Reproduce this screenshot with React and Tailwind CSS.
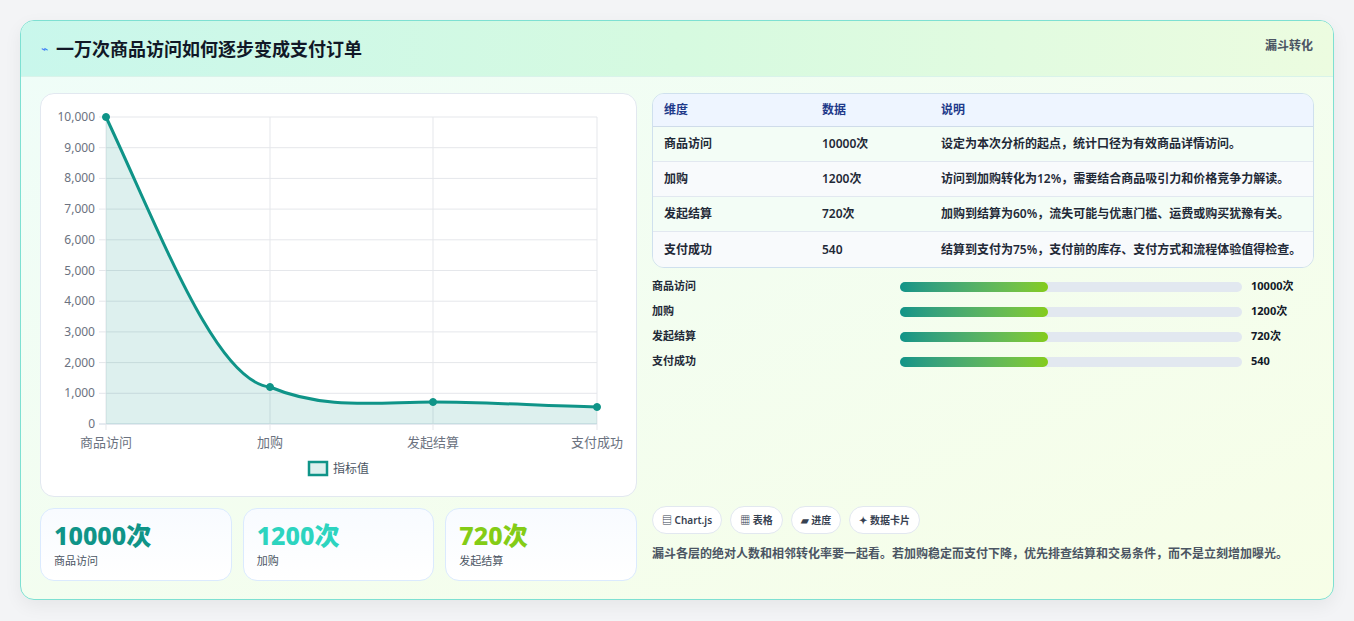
export default function App() {
  const f = { fontFamily: '"Noto Sans","Noto Sans CJK SC",sans-serif' };
  const rows = [
    ["商品访问", "10000次", "设定为本次分析的起点，统计口径为有效商品详情访问。"],
    ["加购", "1200次", "访问到加购转化为12%，需要结合商品吸引力和价格竞争力解读。"],
    ["发起结算", "720次", "加购到结算为60%，流失可能与优惠门槛、运费或购买犹豫有关。"],
    ["支付成功", "540", "结算到支付为75%，支付前的库存、支付方式和流程体验值得检查。"],
  ];
  const yTicks = [0,1,2,3,4,5,6,7,8,9,10];
  const py = (v) => 330 - v * 30.7;
  const xs = [65, 229, 392, 556];
  const line = "M65 23 C120 140 175 288 229 293 C283 316 337 308 392 308 C447 308 501 312 556 313";
  return (
    <div className="w-[1354px] h-[621px] bg-[#f3f4f6] pt-[20px] px-[20px]" style={f}>
      <div className="h-[580px] rounded-[14px] border border-[#7ee0d2] bg-gradient-to-br from-[#effdf9] to-[#f7fee7] overflow-hidden shadow-[0_6px_18px_rgba(0,0,0,0.06)]">
        <div className="h-[56px] flex items-start justify-between px-[20px] bg-gradient-to-r from-[#c9f7ec] via-[#d6fae0] to-[#ecfce0] border-b border-[#d9f3ea]">
          <div className="flex items-center gap-[8px] h-[56px]">
            <span className="text-[#3b82f6] text-[12px]">⌁</span>
            <span className="text-[18px] font-bold text-[#111827]">一万次商品访问如何逐步变成支付订单</span>
          </div>
          <span className="mt-[16px] text-[12px] font-bold text-[#4b5563]">漏斗转化</span>
        </div>
        <div className="flex gap-[15px] px-[19px] pt-[16px]">
          <div className="w-[597px] flex flex-col gap-[11px]">
            <div className="h-[404px] bg-white rounded-[14px] border border-[#e2e8f0]">
              <svg width="597" height="404" className="block">
                {yTicks.map((t) => (
                  <g key={t}>
                    <line x1="58" x2="556" y1={py(t)} y2={py(t)} stroke={t===0?"#cbd5e1":"#e5e7eb"} />
                    <text x="54" y={py(t) + 4} textAnchor="end" fontSize="12" fill="#6b7280">{t === 0 ? "0" : (t * 1000).toLocaleString("en-US")}</text>
                  </g>
                ))}
                {xs.map((x) => <line key={x} x1={x} x2={x} y1="23" y2="336" stroke="#e5e7eb" />)}
                <path d={line + " L556 330 L65 330 Z"} fill="#0d9488" fillOpacity="0.14" />
                <path d={line} fill="none" stroke="#0f9488" strokeWidth="3" />
                {[[65,23],[229,293],[392,308],[556,313]].map(([x,y]) => <circle key={x} cx={x} cy={y} r="3.5" fill="#0f9488" stroke="#0f9488" />)}
                {["商品访问","加购","发起结算","支付成功"].map((l, i) => (
                  <text key={l} x={i === 3 ? 582 : i === 0 ? 65 : xs[i]} y="353" textAnchor={i === 3 ? "end" : "middle"} fontSize="13" fill="#6b7280">{l}</text>
                ))}
                <rect x="268" y="368" width="18" height="13" fill="#dcf0ee" stroke="#0f9488" strokeWidth="2.5" />
                <text x="292" y="379" fontSize="12" fill="#4b5563">指标值</text>
              </svg>
            </div>
            <div className="grid grid-cols-3 gap-[11px]">
              {[["10000次","商品访问","text-[#0f9488]"],["1200次","加购","text-[#2dd4bf]"],["720次","发起结算","text-[#84cc16]"]].map(([v,l,c]) => (
                <div key={l} className="h-[73px] rounded-[14px] border border-[#dbeafe] bg-gradient-to-b from-[#f8fbff] to-white px-[13px] pt-[10px]">
                  <div className={"text-[25px] font-extrabold leading-[32px] " + c}>{v}</div>
                  <div className="text-[11px] text-[#4b5563] mt-[2px]">{l}</div>
                </div>
              ))}
            </div>
          </div>
          <div className="flex-1 flex flex-col">
            <div className="rounded-[12px] border border-[#cfe0ee] overflow-hidden text-[12px] font-semibold">
              <div className="flex h-[33px] items-center bg-[#eef5ff] text-[#1e3a8a] border-b border-[#cfdcea] px-[11px]">
                <div className="w-[158px]">维度</div><div className="w-[119px]">数据</div><div>说明</div>
              </div>
              {rows.map((r, i) => (
                <div key={i} className={"flex h-[35px] items-center px-[11px] text-[#1f2937] " + (i < 3 ? "border-b border-[#e2e8f0] " : "") + (i % 2 === 0 ? "bg-[#f3fdf6]" : "bg-[#f8fafc]")}>
                  <div className="w-[158px]">{r[0]}</div><div className="w-[119px]">{r[1]}</div><div>{r[2]}</div>
                </div>
              ))}
            </div>
            <div className="flex flex-col gap-[12px] mt-[12px]">
              {rows.map((r) => (
                <div key={r[0]} className="flex items-center h-[13px] text-[11px] font-semibold text-[#1f2937]">
                  <div className="w-[248px]">{r[0]}</div>
                  <div className="w-[342px] h-[10px] rounded-full bg-[#e2e8f0]">
                    <div className="w-[148px] h-[10px] rounded-full bg-gradient-to-r from-[#0f9488] to-[#84cc16]" />
                  </div>
                  <div className="ml-[9px] font-bold text-[#111827]">{r[1]}</div>
                </div>
              ))}
            </div>
            <div className="flex gap-[8px] mt-[138px] text-[10px] font-semibold text-[#374151]">
              {["▤ Chart.js","▦ 表格","▰ 进度","✦ 数据卡片"].map((c) => (
                <span key={c} className="h-[28px] px-[9px] flex items-center rounded-full border border-[#e2e8f0] bg-white">{c}</span>
              ))}
            </div>
            <p className="mt-[10px] text-[12px] font-semibold leading-[20px] text-[#4b5563]">漏斗各层的绝对人数和相邻转化率要一起看。若加购稳定而支付下降，优先排查结算和交易条件，而不是立刻增加曝光。</p>
          </div>
        </div>
      </div>
    </div>
  );
}
